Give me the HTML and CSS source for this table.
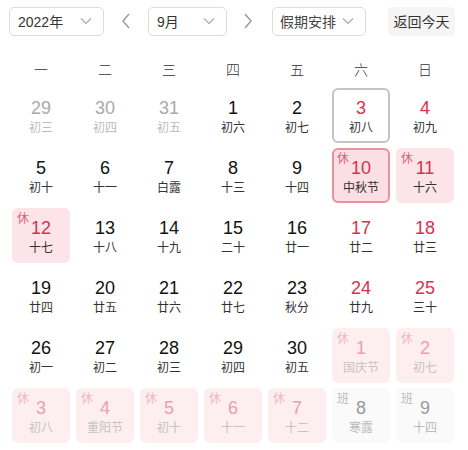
FILE: index.html
```html
<!DOCTYPE html>
<html lang="zh">
<head>
<meta charset="utf-8">
<link rel="stylesheet" href="styles.css">
</head>
<body>
<div class="cal">
  <div class="toolbar">
    <div class="select year"><span>2022年</span><svg class="caret" viewBox="0 0 12 8" width="12" height="8"><path d="M1 1.5 L6 6.5 L11 1.5" /></svg></div>
    <div class="nav"><svg viewBox="0 0 10 16" width="10" height="16"><path d="M8 1 L2 8 L8 15" /></svg></div>
    <div class="select month"><span>9月</span><svg class="caret" viewBox="0 0 12 8" width="12" height="8"><path d="M1 1.5 L6 6.5 L11 1.5" /></svg></div>
    <div class="nav"><svg viewBox="0 0 10 16" width="10" height="16"><path d="M2 1 L8 8 L2 15" /></svg></div>
    <div class="select holiday"><span>假期安排</span><svg class="caret" viewBox="0 0 12 8" width="12" height="8"><path d="M1 1.5 L6 6.5 L11 1.5" /></svg></div>
    <div class="today-btn">返回今天</div>
  </div>
  <div class="weekdays">
    <span>一</span><span>二</span><span>三</span><span>四</span><span>五</span><span>六</span><span>日</span>
  </div>
  <div class="grid">
    <div class="cell other"><b>29</b><i>初三</i></div>
    <div class="cell other"><b>30</b><i>初四</i></div>
    <div class="cell other"><b>31</b><i>初五</i></div>
    <div class="cell"><b>1</b><i>初六</i></div>
    <div class="cell"><b>2</b><i>初七</i></div>
    <div class="cell today weekend"><b>3</b><i>初八</i></div>
    <div class="cell weekend"><b>4</b><i>初九</i></div>

    <div class="cell"><b>5</b><i>初十</i></div>
    <div class="cell"><b>6</b><i>十一</i></div>
    <div class="cell"><b>7</b><i>白露</i></div>
    <div class="cell"><b>8</b><i>十三</i></div>
    <div class="cell"><b>9</b><i>十四</i></div>
    <div class="cell rest selected"><em>休</em><b>10</b><i>中秋节</i></div>
    <div class="cell rest"><em>休</em><b>11</b><i>十六</i></div>

    <div class="cell rest"><em>休</em><b>12</b><i>十七</i></div>
    <div class="cell"><b>13</b><i>十八</i></div>
    <div class="cell"><b>14</b><i>十九</i></div>
    <div class="cell"><b>15</b><i>二十</i></div>
    <div class="cell"><b>16</b><i>廿一</i></div>
    <div class="cell weekend"><b>17</b><i>廿二</i></div>
    <div class="cell weekend"><b>18</b><i>廿三</i></div>

    <div class="cell"><b>19</b><i>廿四</i></div>
    <div class="cell"><b>20</b><i>廿五</i></div>
    <div class="cell"><b>21</b><i>廿六</i></div>
    <div class="cell"><b>22</b><i>廿七</i></div>
    <div class="cell"><b>23</b><i>秋分</i></div>
    <div class="cell weekend"><b>24</b><i>廿九</i></div>
    <div class="cell weekend"><b>25</b><i>三十</i></div>

    <div class="cell"><b>26</b><i>初一</i></div>
    <div class="cell"><b>27</b><i>初二</i></div>
    <div class="cell"><b>28</b><i>初三</i></div>
    <div class="cell"><b>29</b><i>初四</i></div>
    <div class="cell"><b>30</b><i>初五</i></div>
    <div class="cell rest next"><em>休</em><b>1</b><i>国庆节</i></div>
    <div class="cell rest next"><em>休</em><b>2</b><i>初七</i></div>

    <div class="cell rest next"><em>休</em><b>3</b><i>初八</i></div>
    <div class="cell rest next"><em>休</em><b>4</b><i>重阳节</i></div>
    <div class="cell rest next"><em>休</em><b>5</b><i>初十</i></div>
    <div class="cell rest next"><em>休</em><b>6</b><i>十一</i></div>
    <div class="cell rest next"><em>休</em><b>7</b><i>十二</i></div>
    <div class="cell work next"><em>班</em><b>8</b><i>寒露</i></div>
    <div class="cell work next"><em>班</em><b>9</b><i>十四</i></div>
  </div>
</div>
</body>
</html>
```

FILE: styles.css
```css
* { box-sizing: border-box; }
html, body { margin: 0; padding: 0; background: #fff; }
body {
  font-family: "Liberation Sans", Arial, "Noto Sans CJK SC", sans-serif;
  color: #222;
}
.cal { padding: 7px 13px 0 9px; width: 468px; }

.toolbar { display: flex; align-items: center; height: 28px; }
.select {
  display: flex; align-items: center; justify-content: space-between;
  height: 29px; border: 1px solid #dcdcdc; border-radius: 5px;
  padding: 0 11px 0 8px; font-size: 14px; color: #333;
}
.select span { font-family: "Liberation Sans", "Noto Sans CJK SC", sans-serif; }
.caret { fill: none; stroke: #aaa; stroke-width: 1.2; }
.year { width: 95px; }
.month { width: 79px; }
.holiday { width: 94px; padding-left: 7px; }
.holiday span { color: #444; }
.nav { width: 44px; display: flex; justify-content: center; align-items: center; }
.nav:nth-child(4) { width: 45px; padding-right: 4px; }
.nav svg { fill: none; stroke: #999; stroke-width: 1.4; }
.today-btn {
  margin-left: 22px; width: 67px; height: 29px; border-radius: 5px;
  background: #f5f5f5; font-size: 14px; color: #333;
  display: flex; align-items: center; justify-content: center;
  font-family: "Noto Sans CJK SC", sans-serif;
}

.weekdays {
  margin: 22px 0 0 3px; width: 442px; height: 24px;
  display: grid; grid-template-columns: repeat(7, 58px); column-gap: 6px;
  font-size: 14px; color: #333; line-height: 24px; text-align: center;
  font-family: "Noto Sans CJK SC", sans-serif; font-weight: 300;
}

.grid {
  margin: 7px 0 0 3px; width: 442px;
  display: grid; grid-template-columns: repeat(7, 58px);
  grid-auto-rows: 55px; gap: 5px 6px;
}
.cell {
  position: relative; border-radius: 6px; border: 2px solid transparent;
  display: flex; flex-direction: column; align-items: center;
  padding-top: 8px;
}
.cell b {
  font-weight: normal; font-size: 18px; line-height: 20px; color: #111;
  font-family: "Liberation Sans", Arial, sans-serif;
}
.cell i {
  font-style: normal; font-size: 12px; line-height: 18px; color: #333;
  font-family: "Noto Sans CJK SC", sans-serif; margin-top: 0;
}
.cell em {
  position: absolute; left: 3px; top: 1px; font-style: normal;
  font-size: 12px; line-height: 14px; color: #e0607a;
  font-family: "Noto Sans CJK SC", sans-serif;
}
.other b { color: #aaa; }
.other i { color: #bbb; }
.weekend b, .rest b { color: #d9304f; }
.rest { background: #fde4e8; }
.today { border-color: #c4c4c4; }
.selected { border-color: #e8919f; background: #fcdfe4; }
.next.rest { background: #fdeef0; }
.next b { color: #eaa0ae; }
.next i { color: #c4c4c4; }
.next em { color: #f0b8c2; }
.work { background: #fafafa; }
.work b { color: #999; }
.work i { color: #bbb; }
.work em { color: #bbb; }
```
